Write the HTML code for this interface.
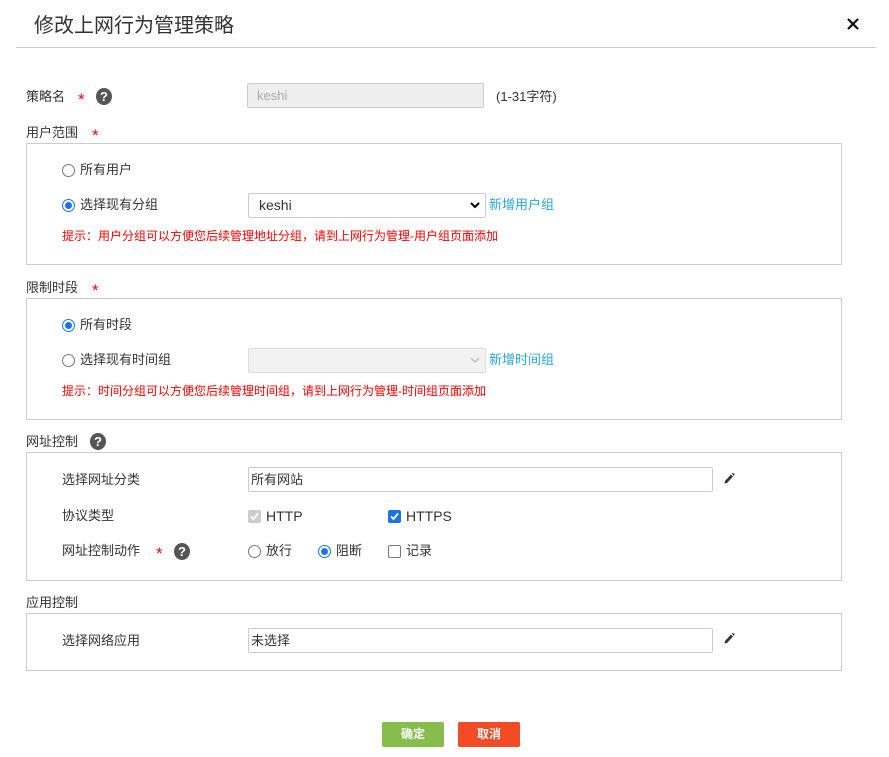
<!DOCTYPE html>
<html><head><meta charset="utf-8">
<style>
*{margin:0;padding:0;box-sizing:border-box}
body{width:889px;height:757px;background:#fff;position:relative;overflow:hidden;font-family:"Liberation Sans","Noto Sans CJK SC",sans-serif;font-size:13px;color:#333}
.a{position:absolute;white-space:nowrap;line-height:16px}
.star{color:#f00;font-size:17px}
.q{position:absolute;width:16px;height:17px;border-radius:50%;background:#555;color:#fff;font-size:13px;font-weight:bold;text-align:center;line-height:17px}
.box{position:absolute;left:26px;width:816px;border:1px solid #ccc}
.radio{position:absolute;width:13px;height:13px;border:1px solid #777;border-radius:50%;background:#fff}
.radio.on{border-color:#1a73e8}
.radio.on:after{content:"";position:absolute;left:2px;top:2px;width:7px;height:7px;border-radius:50%;background:#1a73e8}
.cb{position:absolute;width:13px;height:13px;border:1px solid #777;border-radius:2px;background:#fff}
.inp{position:absolute;border:1px solid #ccc;border-radius:2px;background:#fff;padding-left:2px;line-height:23px}
.link{color:#29a8e0}
.hint{color:#f00;font-size:12px}
.btn{position:absolute;width:62px;height:25px;color:#fff;text-align:center;line-height:25px;font-size:12px;font-weight:bold;border-radius:2px}
</style></head><body>
<div class="a" style="left:34px;top:14px;font-size:20px;line-height:24px;color:#333">修改上网行为管理策略</div>
<svg class="a" style="left:847px;top:18px" width="12" height="12" viewBox="0 0 12 12"><path d="M1 1L11 11M11 1L1 11" stroke="#111" stroke-width="2.2"/></svg>
<div class="a" style="left:16px;top:47px;width:860px;height:1px;background:#ccc"></div>

<div class="a" style="left:26px;top:89px">策略名</div>
<div class="a star" style="left:78px;top:92px">*</div>
<div class="q" style="left:96px;top:88px">?</div>
<div class="inp" style="left:247px;top:83px;width:237px;height:25px;background:#eee;color:#aaa;padding-left:9px">keshi</div>
<div class="a" style="left:496px;top:89px">(1-31字符)</div>

<div class="a" style="left:26px;top:125px">用户范围</div>
<div class="a star" style="left:92px;top:128px">*</div>
<div class="box" style="top:143px;height:122px"></div>
<div class="radio" style="left:62px;top:164px"></div>
<div class="a" style="left:80px;top:162px">所有用户</div>
<div class="radio on" style="left:62px;top:199px"></div>
<div class="a" style="left:80px;top:197px">选择现有分组</div>
<div class="inp" style="left:248px;top:193px;width:238px;height:25px;padding-left:10px;font-size:14px">keshi</div>
<svg class="a" style="left:470px;top:201px" width="10" height="8" viewBox="0 0 10 8"><path d="M1 2L5 6L9 2" stroke="#000" stroke-width="2" fill="none"/></svg>
<div class="a link" style="left:489px;top:197px">新增用户组</div>
<div class="a hint" style="left:62px;top:228px">提示：用户分组可以方便您后续管理地址分组，请到上网行为管理-用户组页面添加</div>

<div class="a" style="left:26px;top:280px">限制时段</div>
<div class="a star" style="left:92px;top:283px">*</div>
<div class="box" style="top:298px;height:122px"></div>
<div class="radio on" style="left:62px;top:319px"></div>
<div class="a" style="left:80px;top:317px">所有时段</div>
<div class="radio" style="left:62px;top:354px"></div>
<div class="a" style="left:80px;top:352px">选择现有时间组</div>
<div class="inp" style="left:248px;top:348px;width:238px;height:25px;background:#f2f2f2;border-color:#ddd"></div>
<svg class="a" style="left:470px;top:357px" width="10" height="7" viewBox="0 0 10 7"><path d="M1 1L5 5L9 1" stroke="#bbb" stroke-width="1.3" fill="none"/></svg>
<div class="a link" style="left:489px;top:352px">新增时间组</div>
<div class="a hint" style="left:62px;top:383px">提示：时间分组可以方便您后续管理时间组，请到上网行为管理-时间组页面添加</div>

<div class="a" style="left:26px;top:434px">网址控制</div>
<div class="q" style="left:90px;top:433px">?</div>
<div class="box" style="top:452px;height:129px"></div>
<div class="a" style="left:62px;top:472px">选择网址分类</div>
<div class="inp" style="left:248px;top:467px;width:465px;height:25px">所有网站</div>
<svg class="a" style="left:723px;top:472px" width="12" height="13" viewBox="0 0 12 13"><path d="M2 9L8 2.5L10 4.5L4 11L1.5 11.5Z" fill="#333"/><path d="M8.8 1.7L9.8 0.7L11.8 2.7L10.8 3.7Z" fill="#333"/></svg>
<div class="a" style="left:62px;top:508px">协议类型</div>
<div class="cb" style="left:248px;top:510px;background:#ccc;border-color:#ccc"></div>
<svg class="a" style="left:249px;top:511px" width="11" height="11" viewBox="0 0 11 11"><path d="M2 5.5L4.5 8L9 2.5" stroke="#fff" stroke-width="1.8" fill="none"/></svg>
<div class="a" style="left:266px;top:508px;font-size:14px;color:#333">HTTP</div>
<div class="cb" style="left:388px;top:510px;background:#1a73e8;border-color:#1a73e8"></div>
<svg class="a" style="left:389px;top:511px" width="11" height="11" viewBox="0 0 11 11"><path d="M2 5.5L4.5 8L9 2.5" stroke="#fff" stroke-width="1.8" fill="none"/></svg>
<div class="a" style="left:406px;top:508px;font-size:14px">HTTPS</div>
<div class="a" style="left:62px;top:543px">网址控制动作</div>
<div class="a star" style="left:156px;top:546px">*</div>
<div class="q" style="left:174px;top:543px">?</div>
<div class="radio" style="left:248px;top:545px"></div>
<div class="a" style="left:266px;top:543px">放行</div>
<div class="radio on" style="left:318px;top:545px"></div>
<div class="a" style="left:336px;top:543px">阻断</div>
<div class="cb" style="left:388px;top:545px"></div>
<div class="a" style="left:406px;top:543px">记录</div>

<div class="a" style="left:26px;top:595px">应用控制</div>
<div class="box" style="top:613px;height:58px"></div>
<div class="a" style="left:62px;top:633px">选择网络应用</div>
<div class="inp" style="left:248px;top:628px;width:465px;height:25px">未选择</div>
<svg class="a" style="left:723px;top:632px" width="12" height="13" viewBox="0 0 12 13"><path d="M2 9L8 2.5L10 4.5L4 11L1.5 11.5Z" fill="#333"/><path d="M8.8 1.7L9.8 0.7L11.8 2.7L10.8 3.7Z" fill="#333"/></svg>

<div class="btn" style="left:382px;top:722px;background:#86bd4c">确定</div>
<div class="btn" style="left:458px;top:722px;background:#f44b27">取消</div>
</body></html>
